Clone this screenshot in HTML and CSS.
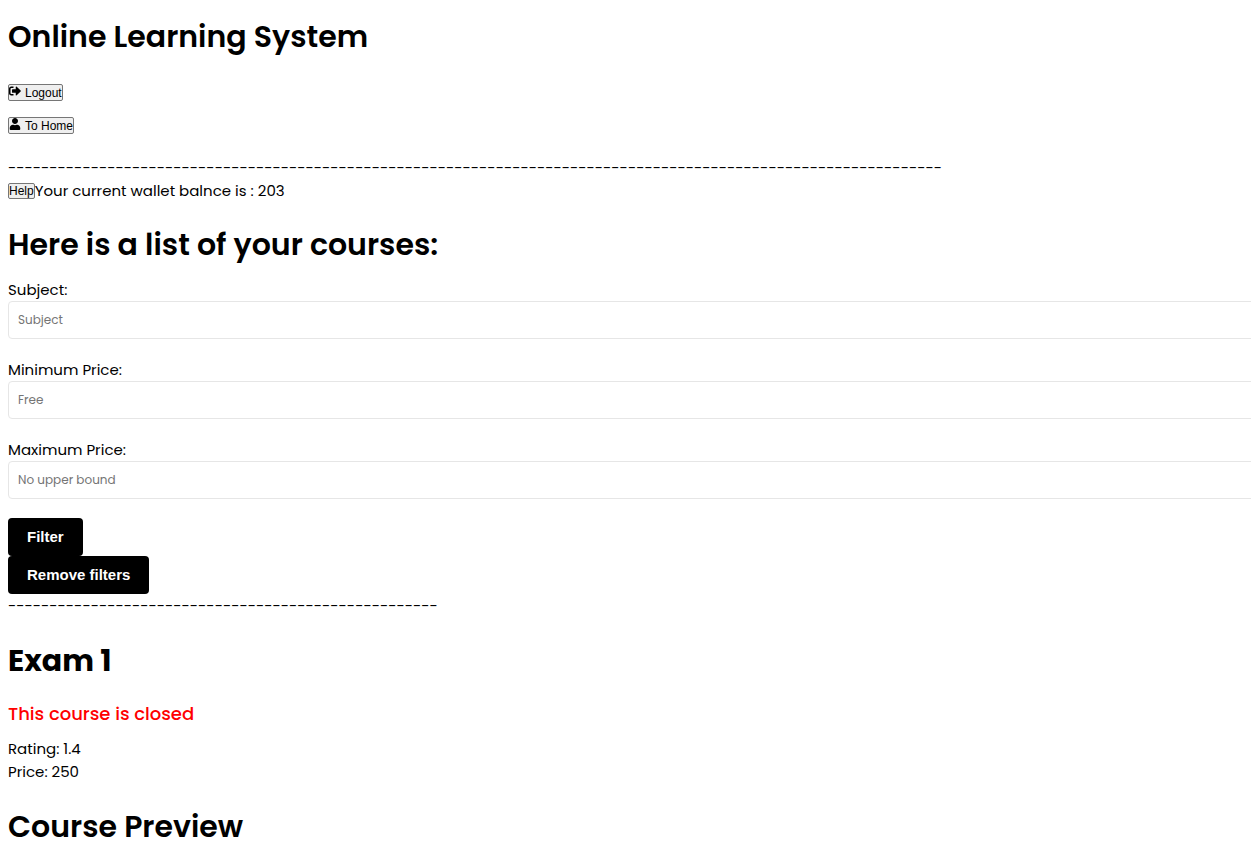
FILE: index.html
```html
<!DOCTYPE html>
<html lang="en">
<head>
<meta charset="utf-8">
<title>Online Learning System</title>
<link rel="stylesheet" href="styles.css">
</head>
<body>
<header class="top">
  <h1 class="title">Online Learning System</h1>
  <nav class="nav">
    <button class="plain" type="button"><svg class="icon" viewBox="0 0 512 512" aria-hidden="true"><path d="M497 273L329 441c-15 15-41 4.500-41-17v-96H152c-13.300 0-24-10.700-24-24v-96c0-13.300 10.700-24 24-24h136V88c0-21.400 25.900-32 41-17l168 168c9.300 9.400 9.300 24.600 0 34zM192 436v-40c0-6.600-5.400-12-12-12H96c-17.700 0-32-14.300-32-32V160c0-17.700 14.300-32 32-32h84c6.600 0 12-5.400 12-12V76c0-6.600-5.400-12-12-12H96c-53 0-96 43-96 96v192c0 53 43 96 96 96h84c6.600 0 12-5.400 12-12z"/></svg><span>Logout</span></button>
    <button class="plain" type="button"><svg class="icon" viewBox="-32 0 512 512" aria-hidden="true"><path d="M224 256c70.700 0 128-57.300 128-128S294.700 0 224 0 96 57.300 96 128s57.300 128 128 128zm89.600 32h-16.700c-22.200 10.200-46.900 16-72.900 16s-50.600-5.800-72.900-16h-16.700C60.200 288 0 348.200 0 422.400V464c0 26.500 21.500 48 48 48h352c26.500 0 48-21.500 48-48v-41.600c0-74.200-60.200-134.400-134.400-134.400z"/></svg><span>To Home</span></button>
  </nav>
  <div class="rule">-----------------------------------------------------------------------------------------------------------------</div>
  <div class="wallet"><button class="plain help" type="button">Help</button><span>Your current wallet balnce is : 203</span></div>
</header>
<main>
  <h1 class="title">Here is a list of your courses:</h1>
  <form class="filters">
    <label for="subject">Subject:</label>
    <input class="field" id="subject" type="text" placeholder="Subject">
    <label for="min">Minimum Price:</label>
    <input class="field" id="min" type="text" placeholder="Free">
    <label for="max">Maximum Price:</label>
    <input class="field" id="max" type="text" placeholder="No upper bound">
    <button class="action" type="submit">Filter</button>
    <button class="action" type="reset">Remove filters</button>
  </form>
  <div class="rule">----------------------------------------------------</div>
  <article class="course">
    <h1 class="title name">Exam 1</h1>
    <h4 class="closed">This course is closed</h4>
    <div>Rating: 1.4</div>
    <div>Price: 250</div>
    <h1 class="title">Course Preview</h1>
  </article>
</main>
</body>
</html>
```
FILE: styles.css
```css
html {
  overflow-x: hidden;
}

body {
  margin: 0;
  padding: 0 8px;
  background: #fff;
  color: #000;
  font: 400 15px/23px Poppins, Inter, "Open Sans", sans-serif;
}

.title {
  margin: 20px 0 10px;
  font-size: 30px;
  font-weight: 600;
  line-height: 46px;
}

.top .title {
  margin: 14px 0 24px;
}

.nav {
  display: flex;
  flex-direction: column;
  align-items: flex-start;
  gap: 16px;
  margin-bottom: 22px;
}

.plain {
  display: flex;
  align-items: flex-start;
  gap: 4px;
  height: 17px;
  padding: 0;
  border: 1px solid #767676;
  border-radius: 2px;
  background: #efefef;
  color: #000;
  font: 12px/16px "Liberation Sans", Arial, sans-serif;
}

.icon {
  width: 12px;
  height: 12px;
}

.rule {
  white-space: nowrap;
}

.wallet {
  display: flex;
  align-items: center;
}

.help {
  height: 16px;
  line-height: 14px;
}

.filters {
  display: flex;
  flex-direction: column;
  align-items: flex-start;
}

.field {
  box-sizing: content-box;
  width: 100%;
  height: 36px;
  margin: 0 0 19px;
  padding: 0 9px;
  border: 1px solid #e6e6e6;
  border-radius: 4px;
  background: #fff;
  font: 400 12px/20px Poppins, Inter, "Open Sans", sans-serif;
}

.field::placeholder {
  color: #757575;
}

.action {
  padding: 10px 19px;
  border: 0;
  border-radius: 4px;
  background: #000;
  color: #fff;
  font: bold 15px/18px "Liberation Sans", Arial, sans-serif;
}

.course .title {
  margin-top: 21px;
}

.name {
  font-weight: 700;
}

.closed {
  margin: 17px 0 10px;
  color: red;
  font-size: 18px;
  font-weight: 500;
  line-height: 26px;
}
```
